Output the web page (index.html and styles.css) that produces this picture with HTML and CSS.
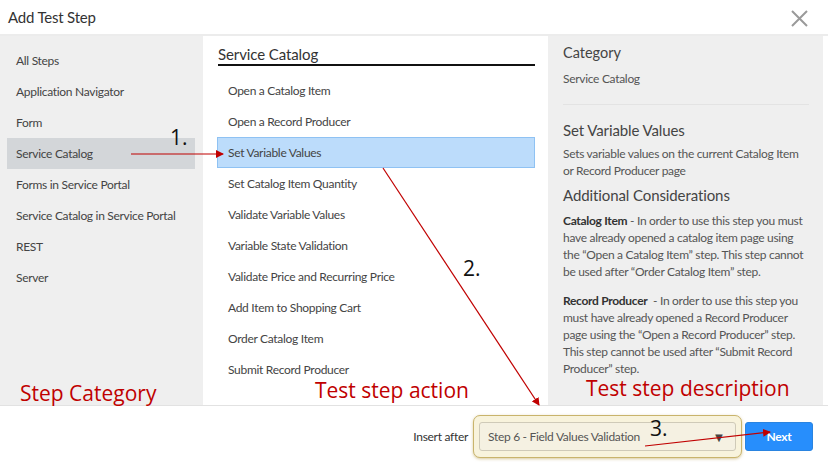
FILE: index.html
```html
<!DOCTYPE html>
<html lang="en">
<head>
  <meta charset="UTF-8" />
  <title>Add Test Step</title>
  <link rel="stylesheet" href="styles.css">
</head>
<body>
  <div class="dialog">
    <header class="dlg-head">
      <h1>Add Test Step</h1>
      <button class="close" aria-label="Close">
        <svg width="17" height="17" viewBox="0 0 17 17"><path d="M1 1 L16 16 M16 1 L1 16" stroke="#9a9a9a" stroke-width="2" fill="none"/></svg>
      </button>
    </header>

    <div class="dlg-body">
      <nav class="categories">
        <div class="cat">All Steps</div>
        <div class="cat">Application Navigator</div>
        <div class="cat">Form</div>
        <div class="cat selected">Service Catalog</div>
        <div class="cat">Forms in Service Portal</div>
        <div class="cat">Service Catalog in Service Portal</div>
        <div class="cat">REST</div>
        <div class="cat">Server</div>
      </nav>

      <section class="steps">
        <h2>Service Catalog</h2>
        <div class="step">Open a Catalog Item</div>
        <div class="step">Open a Record Producer</div>
        <div class="step selected">Set Variable Values</div>
        <div class="step">Set Catalog Item Quantity</div>
        <div class="step">Validate Variable Values</div>
        <div class="step">Variable State Validation</div>
        <div class="step">Validate Price and Recurring Price</div>
        <div class="step">Add Item to Shopping Cart</div>
        <div class="step">Order Catalog Item</div>
        <div class="step">Submit Record Producer</div>
      </section>

      <aside class="details">
        <h3>Category</h3>
        <p class="cat-name">Service Catalog</p>
        <hr>
        <h3 class="big">Set Variable Values</h3>
        <p>Sets variable values on the current Catalog Item or Record Producer page</p>
        <h3 class="big more">Additional Considerations</h3>
        <p><b>Catalog Item</b> - In order to use this step you must have already opened a catalog item page using the “Open a Catalog Item” step. This step cannot be used after “Order Catalog Item” step.</p>
        <p class="gap"><b>Record Producer</b>&nbsp; - In order to use this step you must have already opened a Record Producer page using the “Open a Record Producer” step. This step cannot be used after “Submit Record Producer” step.</p>
      </aside>
    </div>

    <footer class="dlg-foot">
      <span class="insert-label">Insert after</span>
      <div class="glow">
        <div class="select">
          <span>Step 6 - Field Values Validation</span>
          <span class="caret">&#9660;</span>
        </div>
      </div>
      <button class="next">Next</button>
    </footer>

    <!-- annotations drawn over the screenshot -->
    <div class="note red n-category">Step Category</div>
    <div class="note red n-action">Test step action</div>
    <div class="note red n-desc">Test step description</div>
    <div class="note num n1">1.</div>
    <div class="note num n2">2.</div>
    <div class="note num n3">3.</div>
    <svg class="arrows" width="828" height="467" viewBox="0 0 828 467">
      <defs>
        <marker id="head" markerWidth="8" markerHeight="8" refX="7" refY="4" orient="auto" markerUnits="userSpaceOnUse">
          <path d="M0 0 L8 4 L0 8 Z" fill="#c00000"/>
        </marker>
      </defs>
      <line x1="131" y1="154" x2="223" y2="154" stroke="#c00000" stroke-width="1.2" marker-end="url(#head)"/>
      <line x1="383" y1="168" x2="539" y2="405" stroke="#c00000" stroke-width="1.2" marker-end="url(#head)"/>
      <line x1="645" y1="446" x2="770" y2="432" stroke="#c00000" stroke-width="1.2" marker-end="url(#head)"/>
    </svg>
  </div>
</body>
</html>
```

FILE: styles.css
```css
body {
  margin: 0;
  font-family: Lato, "Noto Sans", sans-serif;
  color: #444;
  background: #fff;
}
.dialog {
  position: relative;
  width: 828px;
  height: 467px;
  overflow: hidden;
}
.dlg-head {
  height: 34px;
  display: flex;
  align-items: center;
  justify-content: space-between;
  padding: 0 20px 0 8px;
  border-bottom: 2px solid #ececec;
}
.dlg-head h1 {
  margin: 0;
  font-size: 15px;
  font-weight: normal;
  color: #333;
  letter-spacing: -0.2px;
}
.close {
  border: none;
  background: none;
  padding: 0;
  margin-top: 2px;
  display: flex;
}
.dlg-body {
  display: flex;
  height: 369px;
  border-bottom: 1px solid #e2e2e2;
}
.categories {
  width: 203px;
  background: #efefef;
  padding-top: 9px;
}
.cat {
  height: 31px;
  line-height: 31px;
  margin: 0 8px 0 7px;
  padding-left: 9px;
  font-size: 12px;
  letter-spacing: -0.3px;
  color: #444;
  white-space: nowrap;
}
.cat.selected {
  background: #d3d6d9;
}
.steps {
  width: 343px;
  padding: 0 12px 0 14px;
  margin-left: 1px;
  box-sizing: border-box;
}
.steps h2 {
  margin: 9px 0 9px;
  font-size: 15px;
  letter-spacing: -0.1px;
  font-weight: normal;
  color: #333;
  line-height: 18px;
  padding-bottom: 1px;
  border-bottom: 2px solid #111;
}
.step {
  height: 31px;
  line-height: 31px;
  padding-left: 10px;
  font-size: 12px;
  letter-spacing: -0.3px;
  color: #444;
  box-sizing: border-box;
}
.step.selected {
  background: #bcdcfb;
  border: 1px solid #8fc2f3;
  line-height: 29px;
  margin-left: -1px;
  padding-left: 10px;
}
.details {
  width: 275px;
  margin-left: 1px;
  background: #efefef;
  padding: 8px 16px 0 15px;
  box-sizing: border-box;
}
.details h3 {
  margin: 0;
  font-size: 14.5px;
  font-weight: normal;
  color: #444;
  line-height: 18px;
}
.details h3.big {
  font-size: 15px;
  letter-spacing: -0.1px;
  line-height: 20px;
  margin-bottom: 5px;
}
.details h3.more {
  margin-top: 6px;
  margin-bottom: 7px;
}
.details p {
  margin: 0;
  font-size: 12px;
  letter-spacing: -0.3px;
  line-height: 17px;
  color: #555;
}
.details p.cat-name {
  margin-top: 8px;
}
.details p.gap {
  margin-top: 12px;
}
.details b {
  color: #333;
}
.details hr {
  border: none;
  border-top: 1px solid #e3e3e3;
  margin: 17px -2px 15px 0;
}
.dlg-foot {
  display: flex;
  align-items: center;
  justify-content: flex-end;
  height: 61px;
  padding-right: 15px;
}
.insert-label {
  font-size: 12px;
  letter-spacing: -0.3px;
  color: #333;
  margin-right: 5px;
}
.glow {
  padding: 6px 5px;
  background: #f8f3dc;
  border: 1px solid #c9b46c;
  border-radius: 7px;
  box-shadow: 0 1px 3px rgba(180, 150, 60, 0.5);
}
.select {
  width: 257px;
  height: 29px;
  box-sizing: border-box;
  border: 1px solid #cfcab8;
  border-radius: 3px;
  background: #f5f1e2;
  display: flex;
  align-items: center;
  justify-content: space-between;
  padding: 0 10px 0 8px;
  font-size: 12px;
  letter-spacing: -0.3px;
  color: #555;
}
.caret {
  font-size: 13px;
  color: #444;
}
.next {
  margin-left: 3px;
  width: 68px;
  height: 29px;
  border: 1px solid #2a84e0;
  border-radius: 3px;
  background: #278efc;
  color: #fff;
  font-family: Lato, sans-serif;
  font-weight: bold;
  font-size: 12px;
  letter-spacing: -0.3px;
}
.note {
  position: absolute;
  white-space: nowrap;
  font-family: "Open Sans", sans-serif;
}
.red {
  color: #c00000;
  font-size: 21px;
  line-height: 26px;
}
.num {
  color: #111;
  font-size: 21px;
  line-height: 26px;
}
.n-category { left: 20px; top: 380px; }
.n-action { left: 315px; top: 377px; }
.n-desc { left: 586px; top: 375px; }
.n1 { left: 170px; top: 124px; }
.n2 { left: 463px; top: 255px; }
.n3 { left: 650px; top: 415px; }
.arrows {
  position: absolute;
  left: 0;
  top: 0;
  pointer-events: none;
}
```
